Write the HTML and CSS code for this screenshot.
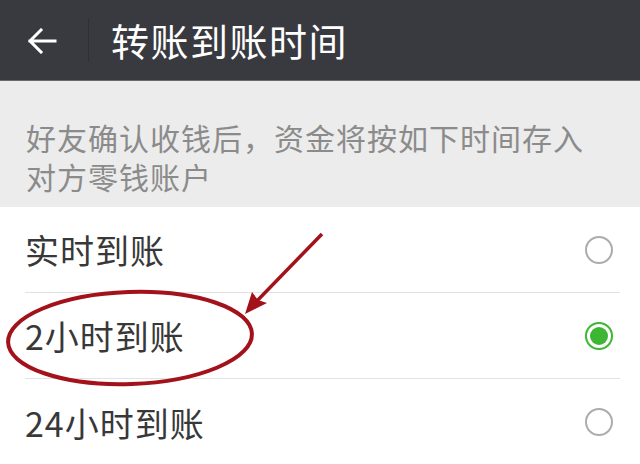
FILE: index.html
```html
<!DOCTYPE html>
<html lang="zh-CN">
<head>
<meta charset="utf-8">
<link rel="stylesheet" href="styles.css">
</head>
<body>
<div class="page">
  <header class="bar">
    <span class="back">
      <svg width="30" height="26" viewBox="0 0 30 26"><path d="M28 13H3M14 2L3 13l11 11" fill="none" stroke="#fff" stroke-width="3" stroke-linecap="square"/></svg>
    </span>
    <span class="sep"></span>
    <h1 class="title">转账到账时间</h1>
  </header>
  <div class="note">好友确认收钱后，资金将按如下时间存入对方零钱账户</div>
  <ul class="list">
    <li class="row"><span class="label">实时到账</span><span class="radio"></span></li>
    <li class="row"><span class="label">2小时到账</span><span class="radio on"></span></li>
    <li class="row"><span class="label">24小时到账</span><span class="radio"></span></li>
  </ul>
  <svg class="mark" width="640" height="464" viewBox="0 0 640 464">
    <ellipse cx="130" cy="338" rx="122" ry="46" fill="none" stroke="#a3121a" stroke-width="4" transform="rotate(-2 130 338)"/>
    <path d="M322 234L250 308" stroke="#a3121a" stroke-width="3.5" fill="none"/>
    <path d="M245 314L252 292L258 300L267 303Z" fill="#a3121a"/>
  </svg>
</div>
</body>
</html>
```
FILE: styles.css
```css
* { box-sizing: border-box; margin: 0; padding: 0; }
body { width: 640px; height: 464px; overflow: hidden; background: #fff;
  font-family: "Noto Sans CJK SC", "Noto Sans", sans-serif; }
.page { position: relative; width: 640px; height: 464px; }
.bar { height: 81px; background: #393a3f; display: flex; align-items: center;
  border-bottom: 1px solid #6a6a6a; }
.back { width: 88px; display: flex; justify-content: center; padding-right: 4px; padding-top: 2px; }
.sep { width: 1px; height: 44px; background: #2f3034; }
.title { color: #fff; font-size: 38px; font-weight: 400; margin-left: 22px; line-height: 1; letter-spacing: 1.5px; }
.note { background: #ececec; color: #8b8b8b; font-size: 30px; line-height: 39px;
  padding: 37px 40px 16px 26px; height: 126px; letter-spacing: 1px; }
.list { list-style: none; background: #fff; }
.row { height: 86px; display: flex; align-items: center; justify-content: space-between;
  margin: 0 20px 0 25px; border-bottom: 1px solid #e2e2e2; padding-right: 7px; }
.row:last-child { border-bottom: none; }
.label { font-size: 34px; color: #383838; letter-spacing: 1px; }
.radio { width: 28px; height: 28px; border: 2px solid #acacac; border-radius: 50%; }
.radio.on { border-color: #3db634; display: flex; align-items: center; justify-content: center; }
.radio.on::after { content: ""; width: 18px; height: 18px; border-radius: 50%; background: #3db634; }
.mark { position: absolute; left: 0; top: 0; pointer-events: none; }
```
